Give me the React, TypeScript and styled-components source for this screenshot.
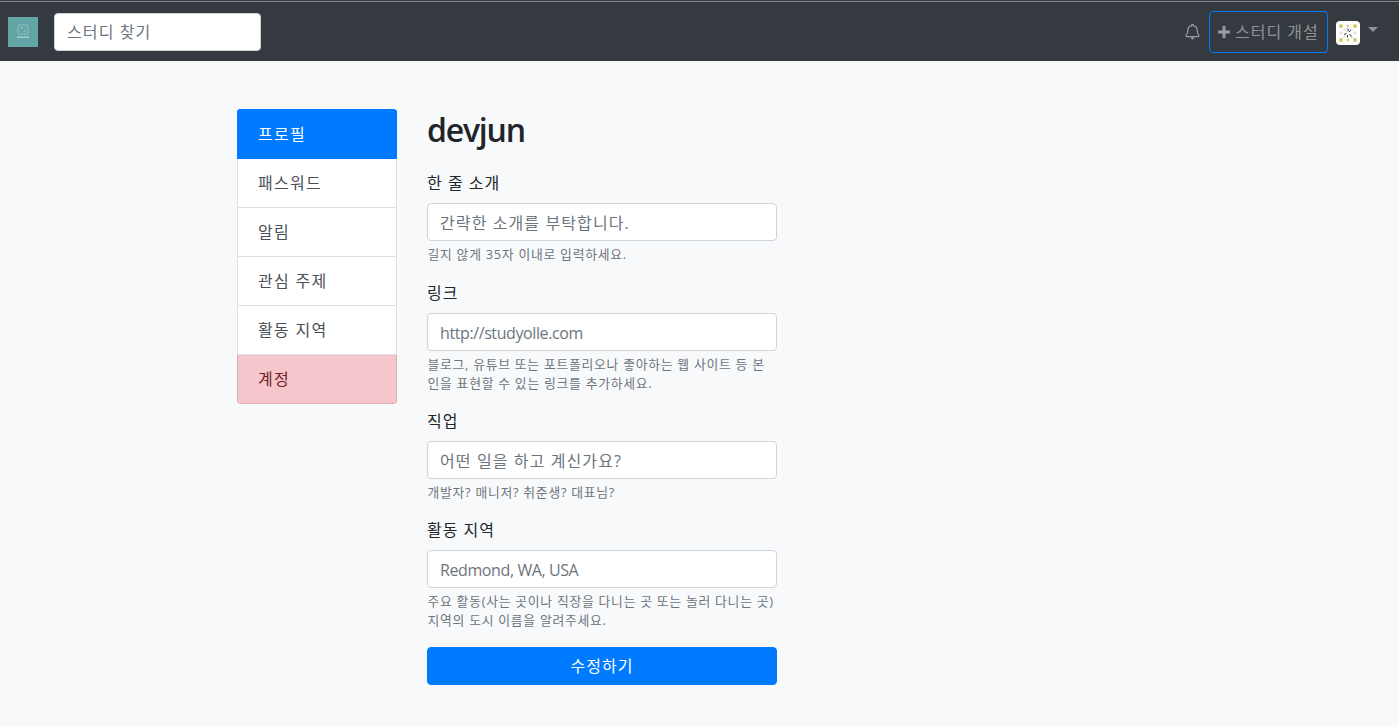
import { createGlobalStyle, styled } from 'styled-components';

const sideItems = [
    { label: '프로필', kind: 'active' },
    { label: '패스워드', kind: 'plain' },
    { label: '알림', kind: 'plain' },
    { label: '관심 주제', kind: 'plain' },
    { label: '활동 지역', kind: 'plain' },
    { label: '계정', kind: 'danger' },
];

const fields = [
    {
        label: '한 줄 소개',
        placeholder: '간략한 소개를 부탁합니다.',
        help: ['길지 않게 35자 이내로 입력하세요.'],
        latin: false,
    },
    {
        label: '링크',
        placeholder: 'http://studyolle.com',
        help: ['블로그, 유튜브 또는 포트폴리오나 좋아하는 웹 사이트 등 본', '인을 표현할 수 있는 링크를 추가하세요.'],
        latin: true,
    },
    {
        label: '직업',
        placeholder: '어떤 일을 하고 계신가요?',
        help: ['개발자? 매니저? 취준생? 대표님?'],
        latin: false,
    },
    {
        label: '활동 지역',
        placeholder: 'Redmond, WA, USA',
        help: ['주요 활동(사는 곳이나 직장을 다니는 곳 또는 놀러 다니는 곳)', '지역의 도시 이름을 알려주세요.'],
        latin: true,
    },
];

export default function App() {
    return (
        <>
            <GlobalStyle />
            <Navbar>
                <Logo>
                    <svg width="30" height="30" viewBox="0 0 30 30">
                        <rect width="30" height="30" fill="#62a5a5" />
                        <rect x="10" y="8" width="10" height="9" rx="1" fill="none" stroke="#8dbfbf" strokeWidth="1" />
                        <path d="M13 11h2M14 10v2M16 15l2-3" stroke="#a5cdcd" strokeWidth="0.8" />
                        <rect x="9" y="19.5" width="12" height="1.5" fill="#a5cdcd" />
                    </svg>
                </Logo>
                <SearchBox placeholder="스터디 찾기" />
                <NavRight>
                    <BellIcon viewBox="0 0 448 512" width="15" height="17">
                        <path
                            fill="none"
                            stroke="#9a9ea2"
                            strokeWidth="36"
                            strokeLinejoin="round"
                            d="M224 40c-14 0-24 10-24 26v14c-68 11-116 66-116 138 0 96-26 126-52 154-4 5-6 10-6 14 0 12 9 22 24 22h348c15 0 24-10 24-22 0-4-2-9-6-14-26-28-52-58-52-154 0-72-48-127-116-138V66c0-16-10-26-24-26z"
                        />
                        <path fill="#9a9ea2" d="M168 440h112c0 32-25 56-56 56s-56-24-56-56z" />
                    </BellIcon>
                    <CreateButton>
                        <PlusIcon viewBox="0 0 14 14" width="14" height="14">
                            <path d="M5.5 1h3v4.5H13v3H8.500V13h-3V8.500H1v-3h4.500z" fill="#9a9ea2" />
                        </PlusIcon>
                        스터디 개설
                    </CreateButton>
                    <Avatar>
                        <svg width="24" height="24" viewBox="0 0 24 24">
                            <rect width="24" height="24" rx="4" fill="#fff" />
                            <g fill="#d2cb62">
                                <circle cx="5" cy="5" r="2" />
                                <circle cx="19" cy="5" r="2" />
                                <circle cx="5" cy="19" r="2" />
                                <circle cx="19" cy="19" r="2" />
                                <circle cx="12" cy="5" r="1.2" />
                                <circle cx="12" cy="19" r="1.2" />
                            </g>
                            <g fill="#e6e6e6">
                                <circle cx="5" cy="12" r="1.8" />
                                <circle cx="19" cy="12" r="1.8" />
                                <circle cx="8.500" cy="8.500" r="1.500" />
                                <circle cx="15.500" cy="15.500" r="1.500" />
                                <circle cx="15.500" cy="8.500" r="1.500" />
                                <circle cx="8.500" cy="15.500" r="1.500" />
                            </g>
                            <path d="M12 7.500v3M8 13.500l2.500-1M13.500 13l2 2.500M15 9l-2 2M11.500 14v2.500" stroke="#3c3c3c" strokeWidth="1" />
                        </svg>
                    </Avatar>
                    <Caret />
                </NavRight>
            </Navbar>
            <Page>
                <Side>
                    {sideItems.map((item) => (
                        <SideItem key={item.label} $kind={item.kind}>
                            {item.label}
                        </SideItem>
                    ))}
                </Side>
                <Main>
                    <Title>devjun</Title>
                    {fields.map((field) => (
                        <Field key={field.label}>
                            <Label>{field.label}</Label>
                            <Input placeholder={field.placeholder} $latin={field.latin} />
                            <Help>
                                {field.help.map((line) => (
                                    <HelpLine key={line}>{line}</HelpLine>
                                ))}
                            </Help>
                        </Field>
                    ))}
                    <Submit>수정하기</Submit>
                </Main>
            </Page>
        </>
    );
}

const GlobalStyle = createGlobalStyle`
    * {
        box-sizing: border-box;
    }
    body {
        margin: 0;
        background: #f8f9fa;
        color: #212529;
        font-family: "Open Sans", "Noto Sans CJK KR", sans-serif;
        font-size: 16px;
        letter-spacing: 1px;
    }
`;

const Navbar = styled.nav`
    display: flex;
    align-items: center;
    height: 61px;
    padding: 2px 21px 0 8px;
    background: linear-gradient(#343a40 1px, #85888b 1px, #85888b 2px, #343a40 2px);
`;

const Logo = styled.div`
    display: flex;
    width: 30px;
    height: 30px;
    margin-right: 16px;
`;

const SearchBox = styled.input`
    width: 207px;
    height: 38px;
    padding: 6px 12px;
    border: 1px solid #ced4da;
    border-radius: 4px;
    background: #fff;
    font: inherit;
    letter-spacing: 1.1px;
    &::placeholder {
        color: #6c757d;
        opacity: 1;
    }
`;

const NavRight = styled.div`
    display: flex;
    align-items: center;
    margin-left: auto;
`;

const BellIcon = styled.svg`
    margin-right: 9px;
`;

const CreateButton = styled.button`
    display: flex;
    align-items: center;
    gap: 4px;
    height: 42px;
    width: 119px;
    padding: 0 7px 2px;
    border: 1px solid #007bff;
    border-radius: 4px;
    background: transparent;
    color: #8f9397;
    font: inherit;
    letter-spacing: 1px;
    white-space: nowrap;
`;

const PlusIcon = styled.svg`
    flex: none;
    margin-top: 2px;
`;

const Avatar = styled.div`
    display: flex;
    margin: 2px 0 0 8px;
`;

const Caret = styled.span`
    width: 0;
    height: 0;
    margin-left: 8px;
    margin-top: -4px;
    border-top: 5px solid #8f9397;
    border-left: 5px solid transparent;
    border-right: 5px solid transparent;
`;

const Page = styled.div`
    display: flex;
    align-items: flex-start;
    gap: 30px;
    padding: 48px 0 0 237px;
`;

const Side = styled.div`
    display: flex;
    flex-direction: column;
    width: 160px;
    border-radius: 4px;
    overflow: hidden;
`;

const sideColors: Record<string, string> = {
    active: 'background: #007bff; color: #fff; border-color: #007bff;',
    plain: 'background: #fff; color: #495057;',
    danger: 'background: #f5c6cb; color: #721c24;',
};

const SideItem = styled.div<{ $kind: string }>`
    display: flex;
    align-items: center;
    height: 49px;
    padding: 0 20px 2px;
    border: 1px solid rgba(0, 0, 0, 0.125);
    border-top-width: 0;
    letter-spacing: 1.3px;
    &:first-child {
        height: 50px;
        border-top-width: 1px;
    }
    ${(p) => sideColors[p.$kind]}
`;

const Main = styled.div`
    display: flex;
    flex-direction: column;
    width: 350px;
`;

const Title = styled.h2`
    margin: 0 0 20px;
    font-size: 32px;
    font-weight: 600;
    line-height: 42.4px;
    letter-spacing: -1.2px;
    color: #212529;
`;

const Field = styled.div`
    display: flex;
    flex-direction: column;
    margin-bottom: 16px;
`;

const Label = styled.label`
    margin-bottom: 8px;
    line-height: 24px;
    color: #212529;
`;

const Input = styled.input<{ $latin: boolean }>`
    height: 38px;
    padding: 7px 12px 5px;
    border: 1px solid #ced4da;
    border-radius: 4px;
    background: #fff;
    font: inherit;
    letter-spacing: ${(p) => (p.$latin ? '-0.4px' : '1.1px')};
    &::placeholder {
        color: #6c757d;
        opacity: 1;
    }
`;

const Help = styled.small`
    display: block;
    margin-top: 4px;
    padding-left: 0.5px;
    font-size: 12.8px;
    line-height: 19.2px;
    letter-spacing: 0.75px;
    color: #6c757d;
`;

const HelpLine = styled.div`
    white-space: nowrap;
`;

const Submit = styled.button`
    height: 38px;
    padding: 0 0 2px;
    border: 1px solid #007bff;
    border-radius: 4px;
    background: #007bff;
    color: #fff;
    font: inherit;
    letter-spacing: 1px;
`;
